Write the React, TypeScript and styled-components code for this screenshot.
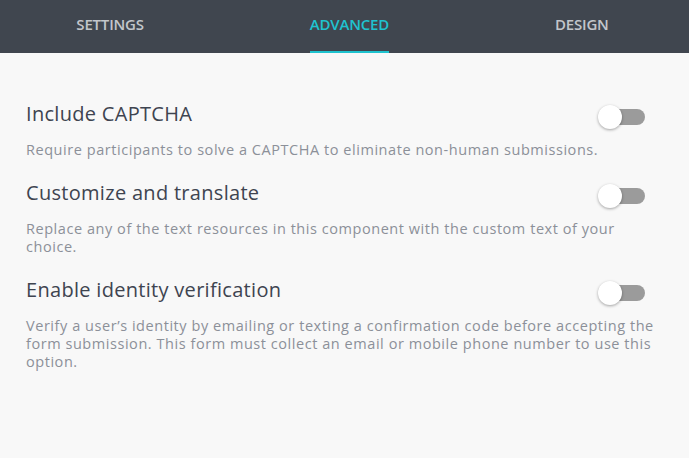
import styled, { createGlobalStyle } from 'styled-components';

const GlobalStyle = createGlobalStyle`
  html, body {
    margin: 0;
    padding: 0;
    background: #f8f8f8;
  }
  * {
    box-sizing: border-box;
  }
`;

const Page = styled.div`
  width: 689px;
  height: 458px;
  background: #f8f8f8;
  font-family: 'Open Sans', 'Noto Sans', sans-serif;
  overflow: hidden;
`;

const TabBar = styled.nav`
  height: 53px;
  background: #40464f;
  display: flex;
  justify-content: center;
  gap: 166px;
  padding-right: 4px;
`;

const Tab = styled.div<{ $isActive?: boolean }>`
  position: relative;
  display: flex;
  align-items: center;
  padding-bottom: 6px;
  font-size: 15px;
  font-weight: 600;
  letter-spacing: -0.2px;
  text-transform: uppercase;
  color: ${({ $isActive }) => ($isActive ? '#1fc3cf' : '#c3c6cb')};

  &::after {
    content: '';
    display: ${({ $isActive }) => ($isActive ? 'block' : 'none')};
    position: absolute;
    left: 0;
    right: 0;
    bottom: 0;
    height: 2px;
    background: #1fc3cf;
  }
`;

const Content = styled.section`
  padding: 48px 44px 0 26px;
  display: flex;
  flex-direction: column;
  gap: 21px;
`;

const Option = styled.div`
  display: flex;
  flex-direction: column;
  gap: 12px;
`;

const OptionHead = styled.div`
  display: flex;
  align-items: flex-start;
  justify-content: space-between;
`;

const Title = styled.h3`
  margin: 0;
  font-size: 20px;
  line-height: 26px;
  font-weight: 400;
  letter-spacing: 0.3px;
  color: #3e4450;
`;

const Description = styled.p`
  margin: 0 -14px 0 0;
  font-size: 14.5px;
  line-height: 18px;
  letter-spacing: 0.55px;
  color: #8c9099;
`;

const Toggle = styled.div<{ $on?: boolean }>`
  position: relative;
  width: 47px;
  height: 24px;
  margin-top: 4px;
  flex-shrink: 0;

  &::before {
    content: '';
    position: absolute;
    left: 1px;
    right: 0;
    top: 4px;
    height: 16px;
    border-radius: 8px;
    background: ${({ $on }) => ($on ? '#1fc3cf' : '#9b9b9b')};
  }

  &::after {
    content: '';
    position: absolute;
    top: 0;
    left: ${({ $on }) => ($on ? '23px' : '0')};
    width: 24px;
    height: 24px;
    border-radius: 50%;
    background: #ffffff;
    box-shadow: 0 1px 3px rgba(0, 0, 0, 0.35);
  }
`;

const tabs = ['Settings', 'Advanced', 'Design'];

const options = [
  {
    title: 'Include CAPTCHA',
    text: 'Require participants to solve a CAPTCHA to eliminate non-human submissions.',
  },
  {
    title: 'Customize and translate',
    text: 'Replace any of the text resources in this component with the custom text of your choice.',
  },
  {
    title: 'Enable identity verification',
    text: 'Verify a user’s identity by emailing or texting a confirmation code before accepting the form submission. This form must collect an email or mobile phone number to use this option.',
  },
];

export default function App() {
  return (
    <Page>
      <GlobalStyle />
      <TabBar>
        {tabs.map(tab => (
          <Tab key={tab} $isActive={tab === 'Advanced'}>
            {tab}
          </Tab>
        ))}
      </TabBar>
      <Content>
        {options.map(option => (
          <Option key={option.title}>
            <OptionHead>
              <Title>{option.title}</Title>
              <Toggle />
            </OptionHead>
            <Description>{option.text}</Description>
          </Option>
        ))}
      </Content>
    </Page>
  );
}
